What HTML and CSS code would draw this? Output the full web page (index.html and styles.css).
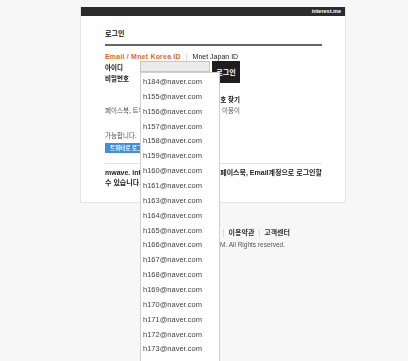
FILE: index.html
```html
<!DOCTYPE html>
<html lang="ko">
<head>
<meta charset="utf-8">
<title>로그인</title>
<link rel="stylesheet" href="styles.css">
</head>
<body>
<div class="page">
  <div class="card">
    <div class="topbar"><span class="brand">interest.me</span></div>
    <div class="card-body">
      <h1 class="title">로그인</h1>
      <div class="tabs">
        <span class="tab on">Email / Mnet Korea ID</span>
        <span class="sep">|</span>
        <span class="tab">Mnet Japan ID</span>
      </div>
      <div class="login-form">
        <div class="fields">
          <div class="field"><span class="label">아이디</span><span class="input focus"></span></div>
          <div class="field"><span class="label">비밀번호</span><span class="input"></span></div>
          <ul class="suggest">
            <li>h184@naver.com</li>
            <li>h155@naver.com</li>
            <li>h156@naver.com</li>
            <li>h157@naver.com</li>
            <li>h158@naver.com</li>
            <li>h159@naver.com</li>
            <li>h160@naver.com</li>
            <li>h161@naver.com</li>
            <li>h163@naver.com</li>
            <li>h164@naver.com</li>
            <li>h165@naver.com</li>
            <li>h166@naver.com</li>
            <li>h167@naver.com</li>
            <li>h168@naver.com</li>
            <li>h169@naver.com</li>
            <li>h170@naver.com</li>
            <li>h171@naver.com</li>
            <li>h172@naver.com</li>
            <li>h173@naver.com</li>
          </ul>
        </div>
        <button class="login-btn">로그인</button>
      </div>
      <div class="find">아이디/비밀번호 찾기</div>
      <div class="desc"><span>페이스북, 트위터 계정으로도</span><span>이용이</span></div>
      <div class="desc2">가능합니다.</div>
      <div class="sns"><span class="tw-btn">트위터로 로그인</span></div>
      <div class="notice">
        <div class="notice-line"><span>mwave. interest.me는 트위터,</span><span>페이스북, Email계정으로 로그인할</span></div>
        <div class="notice-line">수 있습니다.</div>
      </div>
    </div>
  </div>
  <div class="footer">
    <div class="f-links">개인정보처리방침<span class="fsep">|</span>이용약관<span class="fsep">|</span>고객센터</div>
    <div class="f-copy">Copyright © CJ E&amp;M. All Rights reserved.</div>
  </div>
</div>
</body>
</html>
```

FILE: styles.css
```css
html, body {
  margin: 0;
  padding: 0;
  overflow: hidden;
  height: 100%;
}
body {
  background: #f7f7f7;
  font-family: "Liberation Sans", "Noto Sans CJK KR", sans-serif;
  color: #222;
}
.page {
  margin-left: 80px;
  width: 266px;
  padding-top: 7px;
}
.card {
  background: #fff;
  border: 1px solid #e4e4e4;
  border-top: 0;
}
.topbar {
  height: 9px;
  background: #2c2c2c;
  display: flex;
  justify-content: flex-end;
  align-items: center;
  padding-right: 4px;
}
.brand {
  color: #fff;
  font-size: 5.5px;
  font-weight: bold;
  line-height: 9px;
}
.card-body {
  padding: 13px 23px 14px 24px;
}
.title {
  margin: 0;
  font-size: 7px;
  line-height: 9px;
  font-weight: bold;
  font-family: "Noto Sans CJK KR", sans-serif;
  color: #111;
  padding-bottom: 6px;
  border-bottom: 2px solid #666;
}
.tabs {
  margin-top: 6px;
  font-size: 7px;
  line-height: 9px;
  display: flex;
  gap: 5px;
  white-space: nowrap;
}
.tab {
  color: #222;
  filter: grayscale(1);
}
.tab.on {
  color: #e8661c;
  font-weight: bold;
  letter-spacing: 0.2px;
  filter: none;
}
.sep {
  color: #bbb;
}
.login-form {
  display: flex;
  gap: 2px;
  width: 135px;
}
.fields {
  position: relative;
  display: flex;
  flex-direction: column;
}
.field {
  display: flex;
  align-items: center;
  height: 11px;
}
.label {
  width: 35px;
  font-size: 6.5px;
  font-weight: bold;
  font-family: "Noto Sans CJK KR", sans-serif;
  color: #111;
  filter: grayscale(1);
}
.input {
  width: 70px;
  height: 11px;
  box-sizing: border-box;
  border: 1px solid #d0d0d0;
  background: #fff;
}
.input.focus {
  background: #ebebeb;
  border-color: #c6c6c6;
}
.login-btn {
  width: 28px;
  height: 22px;
  margin: 0;
  padding: 0;
  border: 0;
  background: #1e1e1e;
  color: #fff;
  font-size: 7px;
  font-weight: bold;
  font-family: "Noto Sans CJK KR", sans-serif;
}
.suggest {
  position: absolute;
  left: 35px;
  top: 11px;
  z-index: 5;
  width: 80px;
  box-sizing: border-box;
  margin: 0;
  padding: 2px 0 12px 2px;
  list-style: none;
  background: #fff;
  border: 1px solid #cfcfcf;
}
.suggest li {
  height: 14.87px;
  line-height: 14.87px;
  font-size: 7.5px;
  color: #444;
  white-space: nowrap;
  filter: grayscale(1);
}
.find {
  width: 135px;
  margin-top: 12px;
  text-align: right;
  font-size: 6.5px;
  line-height: 9px;
  font-weight: bold;
  color: #111;
  font-family: "Noto Sans CJK KR", sans-serif;
  filter: grayscale(1);
}
.desc {
  width: 135px;
  margin-top: 2px;
  display: flex;
  justify-content: space-between;
  font-size: 6.5px;
  line-height: 9px;
  color: #555;
  font-family: "Noto Sans CJK KR", sans-serif;
  filter: grayscale(1);
}
.desc2 {
  margin-top: 16px;
  font-size: 6.5px;
  line-height: 9px;
  color: #555;
  font-family: "Noto Sans CJK KR", sans-serif;
  filter: grayscale(1);
}
.sns {
  margin-top: 3px;
  display: flex;
}
.tw-btn {
  display: inline-block;
  height: 10px;
  line-height: 10px;
  padding: 0 5px;
  background: #3d8fe0;
  color: #fff;
  font-size: 5.5px;
  font-weight: bold;
  font-family: "Noto Sans CJK KR", sans-serif;
}
.notice {
  margin-top: 10px;
  border-top: 1px solid #e2e2e2;
  padding-top: 4px;
  font-size: 7px;
  line-height: 10px;
  font-weight: bold;
  color: #222;
  font-family: "Liberation Sans", "Noto Sans CJK KR", sans-serif;
  filter: grayscale(1);
}
.notice-line {
  display: flex;
  justify-content: space-between;
  white-space: nowrap;
}
.footer {
  margin-top: 25px;
  padding-right: 56px;
  text-align: right;
  font-family: "Noto Sans CJK KR", sans-serif;
  white-space: nowrap;
  filter: grayscale(1);
}
.f-links {
  font-size: 7px;
  line-height: 9px;
  font-weight: bold;
  color: #333;
}
.fsep {
  color: #bbb;
  font-weight: normal;
  margin: 0 4px;
}
.f-copy {
  margin-top: 3px;
  padding-right: 5px;
  font-size: 6.5px;
  line-height: 9px;
  color: #555;
  font-family: "Liberation Sans", sans-serif;
}
```
